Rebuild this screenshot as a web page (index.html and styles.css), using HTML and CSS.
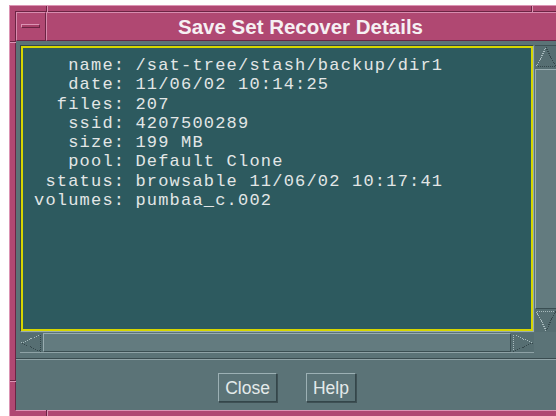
FILE: index.html
```html
<!DOCTYPE html>
<html lang="en">
<head>
<meta charset="utf-8">
<title>Save Set Recover Details</title>
<link rel="stylesheet" href="styles.css">
</head>
<body>
<div class="window">
  <span class="notch notch-top notch-top-left"></span>
  <span class="notch notch-top notch-top-right"></span>
  <span class="notch notch-side notch-left-top"></span>
  <span class="notch notch-side notch-left-bottom"></span>
  <span class="notch notch-bottom notch-bottom-left"></span>
  <div class="inner">
    <header class="titlebar">
      <div class="menu-btn"><span class="menu-dash"></span></div>
      <h1 class="title">Save Set Recover Details</h1>
    </header>
    <main class="client">
      <div class="scrolled">
        <div class="text-view">
          <dl class="details">
            <dt>name:</dt><dd>/sat-tree/stash/backup/dir1</dd>
            <dt>date:</dt><dd>11/06/02 10:14:25</dd>
            <dt>files:</dt><dd>207</dd>
            <dt>ssid:</dt><dd>4207500289</dd>
            <dt>size:</dt><dd>199 MB</dd>
            <dt>pool:</dt><dd>Default Clone</dd>
            <dt>status:</dt><dd>browsable 11/06/02 10:17:41</dd>
            <dt>volumes:</dt><dd>pumbaa_c.002</dd>
          </dl>
        </div>
        <div class="vscroll">
          <svg class="arrow arrow-v" viewBox="0 0 22 22" width="22" height="22">
            <path class="lt" d="M1.5 20.5 L11 1.5"/>
            <path class="dk" d="M11 1.5 L20.5 20.5 L1.5 20.5"/>
          </svg>
          <div class="thumb"></div>
          <svg class="arrow arrow-v" viewBox="0 0 22 22" width="22" height="22">
            <path class="lt" d="M11 20.5 L1.5 1.5 L20.5 1.5"/>
            <path class="dk" d="M20.5 1.5 L11 20.5"/>
          </svg>
        </div>
        <div class="hscroll">
          <svg class="arrow arrow-h" viewBox="0 0 22 20" width="22" height="20">
            <path class="lt" d="M1.5 10 L20.5 1.5"/>
            <path class="dk" d="M20.5 1.5 L20.5 18.5 L1.5 10"/>
          </svg>
          <div class="thumb"></div>
          <svg class="arrow arrow-h" viewBox="0 0 22 20" width="22" height="20">
            <path class="lt" d="M1.5 18.5 L1.5 1.5 L20.5 10"/>
            <path class="dk" d="M20.5 10 L1.5 18.5"/>
          </svg>
        </div>
      </div>
      <div class="separator"></div>
      <div class="actions">
        <button class="btn" type="button">Close</button>
        <button class="btn" type="button">Help</button>
      </div>
    </main>
  </div>
</div>
</body>
</html>
```

FILE: styles.css
```css
html,
body {
  margin: 0;
  overflow: hidden;
  background: #ffffff;
}

body {
  width: 556px;
  height: 416px;
  box-sizing: border-box;
  padding: 5px 0 0 9px;
}

/* Window frame (Motif-style, pink) */
.window {
  position: relative;
  width: 559px;
  height: 412px;
  box-sizing: border-box;
  padding: 5px;
  background: #b04872;
  border: 1px solid;
  border-color: #dc94b4 #6c2444 #6c2444 #dc94b4;
}

.notch {
  position: absolute;
  background: #6c2444;
}

.notch-top {
  top: 0;
  width: 1px;
  height: 6px;
  box-shadow: 1px 0 0 #dc94b4;
}

.notch-top-left { left: 36px; }
.notch-top-right { left: 521px; }

.notch-side {
  left: 0;
  width: 6px;
  height: 1px;
  box-shadow: 0 1px 0 #dc94b4;
}

.notch-left-top { top: 35px; }
.notch-left-bottom { top: 374px; }

.notch-bottom {
  bottom: 0;
  width: 1px;
  height: 6px;
  box-shadow: 1px 0 0 #dc94b4;
}

.notch-bottom-left { left: 36px; }

.inner {
  height: 100%;
  box-sizing: border-box;
  display: flex;
  flex-direction: column;
  border: 1px solid;
  border-color: #6c2444 #dc94b4 #dc94b4 #6c2444;
}

/* Title bar */
.titlebar {
  display: flex;
  height: 29px;
  flex: none;
}

.menu-btn {
  width: 30px;
  box-sizing: border-box;
  display: flex;
  align-items: center;
  justify-content: center;
  border: 1px solid;
  border-color: #d88cae #6c2444 #6c2444 #d88cae;
}

.menu-dash {
  width: 19px;
  height: 4px;
  box-sizing: border-box;
  background: #a84068;
  border: 1px solid;
  border-color: #dc94b4 #6c2444 #6c2444 #dc94b4;
  margin: 0 2px 1px 0;
}

.title {
  flex: 1;
  margin: 0;
  box-sizing: border-box;
  border: 1px solid;
  border-color: #d88cae #6c2444 #6c2444 #d88cae;
  color: #f6f0f3;
  font: bold 20.5px/26px "Liberation Sans", Arial, sans-serif;
  text-align: center;
  padding: 1px 6px 0 0;
  white-space: nowrap;
}

/* Client area */
.client {
  flex: 1;
  display: flex;
  flex-direction: column;
  background: #5b7377;
}

.scrolled {
  margin: 4px 4px 0;
  display: grid;
  grid-template-columns: 1fr 22px;
  grid-template-rows: 287px 20px;
  gap: 1px;
}

.text-view {
  box-sizing: border-box;
  background: #2d5a5f;
  border: 1px solid;
  border-color: #34464a #9aacb0 #9aacb0 #34464a;
  box-shadow: inset 0 0 0 2px #d6d600;
  padding: 10px 0 0 13px;
  overflow: hidden;
}

.details {
  display: grid;
  grid-template-columns: auto 1fr;
  column-gap: 10.2px;
  margin: 0;
  color: #e2e6e6;
  font: 17px/19.3px "Liberation Mono", "Courier New", monospace;
  letter-spacing: 1.2px;
  white-space: nowrap;
}

.details dt {
  text-align: right;
}

.details dd {
  margin: 0;
}

/* Scrollbars */
.vscroll,
.hscroll {
  display: flex;
  box-sizing: border-box;
  background: #566e72;
}

.vscroll {
  flex-direction: column;
  grid-row: 1;
  grid-column: 2;
  border-top: 1px solid #3e5256;
}

.hscroll {
  grid-row: 2;
  grid-column: 1;
  border-bottom: 1px solid #8ea2a6;
}

.arrow {
  flex: none;
  display: block;
}

.arrow path {
  fill: none;
  stroke-width: 1;
  stroke-dasharray: 1 1;
  shape-rendering: crispEdges;
}

.arrow .lt { stroke: #a8babd; }
.arrow .dk { stroke: #34464a; }

.thumb {
  flex: 1;
  box-sizing: border-box;
  background: #637b7f;
  border: 1px solid;
  border-color: #98acb0 #3a4e52 #3a4e52 #98acb0;
}

.vscroll .thumb {
  margin: 1px 0;
}

.hscroll .thumb {
  margin: 0 1px;
}

/* Action area */
.separator {
  margin-top: 5px;
  border-top: 1px solid #3a4c50;
  border-bottom: 1px solid #8fa3a7;
}

.actions {
  flex: 1;
  display: flex;
  justify-content: center;
  align-items: flex-start;
  gap: 29px;
  padding: 13px 3px 0 0;
}

.btn {
  height: 29px;
  box-sizing: border-box;
  padding: 0 6px;
  margin: 0;
  background: #5b7377;
  color: #e4eaea;
  font: 17.5px/26px "Liberation Sans", Arial, sans-serif;
  border: 1px solid;
  border-color: #9cb0b4 #34464a #34464a #9cb0b4;
  box-shadow: 1px 1px 0 #3e5054;
}
```
